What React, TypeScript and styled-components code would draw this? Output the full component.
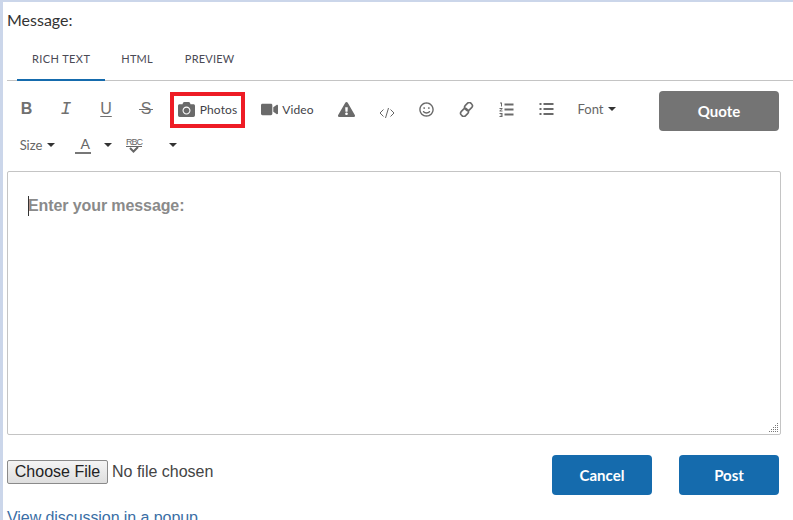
import React from "react";
import styled, { createGlobalStyle } from "styled-components";
import { FaCamera, FaVideo, FaExclamationTriangle, FaRegSmile } from "react-icons/fa";

const Global = createGlobalStyle`
  html, body { margin: 0; padding: 0; height: 520px; overflow: hidden; background: #fff; }
  * { box-sizing: border-box; }
`;

const Page = styled.div`
  width: 793px;
  height: 520px;
  overflow: hidden;
  background: #fff;
  border-left: 3px solid #cbd6ea;
  border-top: 2px solid #cbd6ea;
  padding-left: 4px;
  font-family: Lato, "Liberation Sans", sans-serif;
  color: #333;
`;

const Label = styled.div`
  font-size: 16px;
  line-height: 21px;
  margin-top: 7px;
  margin-bottom: 1px;
  color: #333;
`;

const Tabs = styled.div`
  display: flex;
  height: 50px;
  padding-left: 10px;
  border-bottom: 1px solid #c4c4c4;
`;

const Tab = styled.div<{ $active?: boolean }>`
  height: 50px;
  padding: 21px ${(p) => (p.$active ? "15px" : "16px")} 0;
  font-size: 11px;
  line-height: 14px;
  letter-spacing: ${(p) => (p.$active ? "0.4px" : "0.2px")};
  color: #4a4a55;
  border-bottom: ${(p) => (p.$active ? "2px solid #156bad" : "none")};
`;

const EditorHead = styled.div`
  display: flex;
  align-items: flex-start;
  justify-content: space-between;
  height: 90px;
  padding-right: 14px;
`;

const Toolbar = styled.div`
  display: flex;
  flex-wrap: wrap;
  width: 640px;
`;

const ToolRow = styled.div`
  display: flex;
  align-items: center;
  height: 36px;
  width: 100%;
`;

const Row1 = styled(ToolRow)`
  margin-top: 10px;
`;

const Tool = styled.div<{ $w?: number }>`
  display: flex;
  align-items: center;
  justify-content: center;
  width: ${(p) => p.$w ?? 40}px;
  height: 36px;
  flex: none;
  color: #6a6a6a;
  font-size: 12px;
  gap: 4px;
`;

const PhotoTool = styled(Tool)`
  border: 4px solid #ee1c25;
  margin: 2px 16px 0 4px;
  padding-bottom: 2px;
  gap: 5px;
`;

const ToolText = styled.span`
  color: #3f3f48;
  font-size: 12px;
  letter-spacing: 0.1px;
`;

const Menu = styled(Tool)`
  color: #666;
  gap: 5px;
  font-size: 13px;
`;

const Glyph = styled.span`
  font-family: "Liberation Sans", sans-serif;
  font-size: 16px;
  line-height: 18px;
  color: #707070;
`;

const BoldGlyph = styled(Glyph)`
  font-weight: 700;
`;

const ItalicGlyph = styled(Glyph)`
  font-family: "Liberation Mono", monospace;
  font-style: italic;
  font-size: 18px;
`;

const UnderGlyph = styled(Glyph)`
  text-decoration: underline;
  text-underline-offset: 2px;
`;

const StrikeGlyph = styled(Glyph)`
  position: relative;
  &::after {
    content: "";
    position: absolute;
    left: -2px;
    right: -2px;
    top: 9px;
    height: 1px;
    background: #707070;
  }
`;

const Caret = styled.i`
  display: inline-block;
  width: 0;
  height: 0;
  border-left: 4px solid transparent;
  border-right: 4px solid transparent;
  border-top: 4px solid #333;
`;

const ColorA = styled.span`
  display: inline-block;
  width: 16px;
  text-align: right;
  font-size: 14px;
  line-height: 16px;
  color: #666;
  border-bottom: 2px solid #777;
  margin-right: 13px;
  padding-right: 1px;
`;

const ColorMenu = styled(Menu)`
  gap: 0;
`;

const Spell = styled.span`
  display: inline-flex;
  flex-direction: column;
  align-items: center;
  width: 16px;
  font-family: "Liberation Sans", sans-serif;
  font-size: 9px;
  line-height: 8px;
  letter-spacing: -1px;
  color: #666;
  text-decoration: underline;
`;

const QuoteButton = styled.button`
  width: 120px;
  height: 40px;
  margin-top: 10px;
  border: none;
  border-radius: 4px;
  background: #747474;
  color: #fff;
  font-family: inherit;
  font-size: 15px;
  font-weight: 700;
`;

const Editor = styled.div`
  position: relative;
  width: 774px;
  height: 264px;
  border: 1px solid #c4c4c4;
  border-radius: 2px;
  padding: 24px 20px;
`;

const Placeholder = styled.div`
  position: relative;
  font-family: "Liberation Sans", sans-serif;
  font-size: 16px;
  font-weight: 700;
  line-height: 20px;
  letter-spacing: -0.1px;
  color: #8a8a8a;
  width: max-content;
  &::before {
    content: "";
    position: absolute;
    left: 0;
    top: 0;
    width: 1px;
    height: 20px;
    background: #333;
  }
`;

const Grip = styled.svg`
  position: absolute;
  right: 2px;
  bottom: 2px;
`;

const Footer = styled.div`
  display: flex;
  align-items: flex-start;
  justify-content: space-between;
  height: 60px;
  padding: 20px 14px 0 0;
`;

const FileInput = styled.input`
  font-family: "Liberation Sans", sans-serif;
  font-size: 16px;
  color: #444;
  margin-top: 5px;
  width: 300px;
  &::file-selector-button {
    font: inherit;
    color: #222;
    height: 24px;
    width: 101px;
    padding: 0;
    margin-right: 4px;
    background: linear-gradient(#f4f4f4, #dedede);
    border: 1px solid #8a8a8a;
    border-radius: 2px;
  }
`;

const Actions = styled.div`
  display: flex;
  gap: 27px;
`;

const ActionButton = styled.button`
  width: 100px;
  height: 40px;
  border: none;
  border-radius: 4px;
  background: #156bad;
  color: #fff;
  font-family: inherit;
  font-size: 15px;
  font-weight: 700;
`;

const Popup = styled.a`
  display: block;
  font-family: "Liberation Sans", sans-serif;
  font-size: 16px;
  line-height: 18px;
  letter-spacing: -0.07px;
  margin-top: 14px;
  color: #3a6ea5;
`;

const CodeIcon = () => (
  <svg width="16" height="12" viewBox="0 0 16 12" fill="none" stroke="#666" strokeWidth="1" style={{ marginTop: 8 }}>
    <path d="M4.5 2.5 L1 6 L4.5 9.5 M11.5 2.5 L15 6 L11.5 9.5 M9.5 1 L6.5 11" />
  </svg>
);

const LinkIcon = () => (
  <svg width="15" height="15" viewBox="0 0 15 15" fill="none" stroke="#6a6a6a" strokeWidth="1.6">
    <rect x="6.5" y="0.5" width="6" height="8" rx="2.6" transform="rotate(45 9.5 4.5)" />
    <rect x="2.5" y="6.5" width="6" height="8" rx="2.6" transform="rotate(45 5.5 10.5)" />
  </svg>
);

const OlIcon = () => (
  <svg width="15" height="15" viewBox="0 0 15 15" fill="#6a6a6a">
    <rect x="5.5" y="1.5" width="9" height="2" />
    <rect x="5.5" y="6.5" width="9" height="2" />
    <rect x="5.5" y="11.5" width="9" height="2" />
    <path d="M1 0.5h2v4H2V1.5H1zM0.5 6h3v1l-2 1.5h2v1h-3v-1l2-1.5h-2zM0.5 11h3v4h-3v-1h2v-.5h-1v-1h1V12h-2z" />
  </svg>
);

const UlIcon = () => (
  <svg width="15" height="14" viewBox="0 0 15 14" fill="#6a6a6a">
    <rect x="4.5" y="1" width="10" height="2" />
    <rect x="4.5" y="6" width="10" height="2" />
    <rect x="4.5" y="11" width="10" height="2" />
    <rect x="0.5" y="1" width="2" height="2" />
    <rect x="0.5" y="6" width="2" height="2" />
    <rect x="0.5" y="11" width="2" height="2" />
  </svg>
);

const GRIP_DOTS = [
  [8, 0],
  [6, 2], [8, 2],
  [4, 4], [6, 4], [8, 4],
  [2, 6], [4, 6], [6, 6], [8, 6],
  [0, 8], [2, 8], [4, 8], [6, 8], [8, 8],
];

const GripIcon = () => (
  <Grip width="9" height="9" viewBox="0 0 9 9" fill="#777">
    {GRIP_DOTS.map(([x, y]) => (
      <rect key={`${x}-${y}`} x={x} y={y} width="1" height="1" />
    ))}
  </Grip>
);

const CheckIcon = () => (
  <svg width="12" height="7" viewBox="0 0 12 7" fill="none" stroke="#666" strokeWidth="2">
    <path d="M2 2 L5.5 5.5 L10 1" />
  </svg>
);

export default function App() {
  return (
    <Page>
      <Global />
      <Label>Message:</Label>
      <Tabs>
        <Tab $active>RICH TEXT</Tab>
        <Tab>HTML</Tab>
        <Tab>PREVIEW</Tab>
      </Tabs>
      <EditorHead>
        <Toolbar>
          <Row1>
            <Tool $w={39}><BoldGlyph>B</BoldGlyph></Tool>
            <Tool><ItalicGlyph>I</ItalicGlyph></Tool>
            <Tool><UnderGlyph>U</UnderGlyph></Tool>
            <Tool><StrikeGlyph>S</StrikeGlyph></Tool>
            <PhotoTool $w={75}><FaCamera size={17} /><ToolText>Photos</ToolText></PhotoTool>
            <Tool $w={53}><FaVideo size={17} /><ToolText>Video</ToolText></Tool>
            <Tool $w={64}><FaExclamationTriangle size={17} /></Tool>
            <Tool $w={18}><CodeIcon /></Tool>
            <Tool $w={60}><FaRegSmile size={15} /></Tool>
            <Tool $w={20}><LinkIcon /></Tool>
            <Tool $w={60}><OlIcon /></Tool>
            <Tool $w={20}><UlIcon /></Tool>
            <Menu $w={82}>Font <Caret /></Menu>
          </Row1>
          <ToolRow>
            <Menu $w={61}>Size <Caret /></Menu>
            <ColorMenu $w={51}><ColorA>A</ColorA><Caret /></ColorMenu>
            <Tool $w={30}>
              <Spell>RBC<CheckIcon /></Spell>
            </Tool>
            <Tool $w={48}><Caret /></Tool>
          </ToolRow>
        </Toolbar>
        <QuoteButton>Quote</QuoteButton>
      </EditorHead>
      <Editor>
        <Placeholder>Enter your message:</Placeholder>
        <GripIcon />
      </Editor>
      <Footer>
        <FileInput type="file" />
        <Actions>
          <ActionButton>Cancel</ActionButton>
          <ActionButton>Post</ActionButton>
        </Actions>
      </Footer>
      <Popup>View discussion in a popup</Popup>
    </Page>
  );
}
